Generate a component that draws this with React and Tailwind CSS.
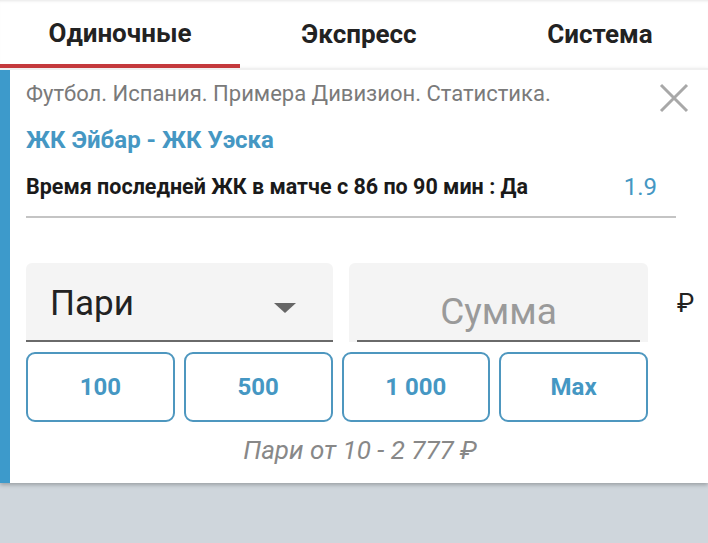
import React from "react";

const tabs = [
  { label: "Одиночные", w: "w-[240px]" },
  { label: "Экспресс", w: "w-[238px]" },
  { label: "Система", w: "flex-1 pl-[14px]" },
];
const amounts = ["100", "500", "1 000", "Max"];

const CloseIcon = () => (
  <svg width="30" height="30" viewBox="0 0 30 30" className="shrink-0 -mr-[13px] mt-[3px]">
    <path d="M2 2 L28 28 M28 2 L2 28" stroke="#a8a8a8" strokeWidth="3" />
  </svg>
);

const App = () => {
  return (
    <div className="w-[708px] h-[543px] bg-[#cfd6dc] font-['Roboto',sans-serif] overflow-hidden">
      <div className="h-[68px] bg-white flex shadow-[inset_0_3px_3px_-2px_rgba(0,0,0,0.1)]">
        {tabs.map((t, i) => (
          <div
            key={t.label}
            className={`${t.w} flex items-center justify-center text-[26px] font-bold text-[#222] ${
              i === 0 ? "border-b-4 border-[#c4393c] pt-[3px]" : ""
            }`}
          >
            {t.label}
          </div>
        ))}
      </div>
      <div className="h-[415px] bg-white flex shadow-[0_2px_4px_rgba(0,0,0,0.25)] border-t-2 border-[#f0f0f0]">
        <div className="w-[10px] shrink-0 bg-[#3d9acb]" />
        <div className="flex-1 min-w-0 pl-4 pr-8 pt-[10px]">
          <div className="flex justify-between items-start h-[28px]">
            <span className="text-[22px] leading-[28px] text-[#7a7a7a] whitespace-nowrap">
              Футбол. Испания. Примера Дивизион. Статистика.
            </span>
            <CloseIcon />
          </div>
          <div className="mt-[18px] h-[28px] text-[24px] leading-[28px] font-bold text-[#4597c3]">
            ЖК Эйбар - ЖК Уэска
          </div>
          <div className="mt-[19px] h-[28px] flex justify-between items-center">
            <span className="text-[21.5px] leading-[28px] font-bold text-[#1a1a1a] whitespace-nowrap">
              Время последней ЖК в матче с 86 по 90 мин : Да
            </span>
            <span className="text-[24px] leading-[28px] text-[#4597c3] mr-[19px]">1.9</span>
          </div>
          <div className="mt-[15px] h-[2px] bg-[#c4c4c4]" />
          <div className="mt-[45px] flex items-center">
            <div className="w-[307px] shrink-0 h-[79px] bg-[#f4f4f4] rounded-t-[6px] border-b-2 border-[#6a6a6a] flex items-center justify-between pl-[24px] pr-[37px]">
              <span className="text-[35px] text-[#222] leading-none mt-[4px]">Пари</span>
              <svg width="22" height="10" viewBox="0 0 22 10" className="mt-[12px]">
                <path d="M0 0 L22 0 L11 10 Z" fill="#666" />
              </svg>
            </div>
            <div className="ml-[16px] w-[299px] shrink-0 h-[79px] bg-[#f4f4f4] rounded-t-[6px] px-[8px] flex">
              <div className="flex-1 border-b-2 border-[#6a6a6a] flex items-center justify-center">
                <span className="text-[37px] text-[#9a9a9a] leading-none mt-[20px]">Сумма</span>
              </div>
            </div>
            <span className="ml-[29px] text-[26px] text-[#222] mt-[2px]">₽</span>
          </div>
          <div className="mt-[10px] w-[622px] grid grid-cols-4 gap-[9px]">
            {amounts.map((a) => (
              <div
                key={a}
                className="h-[70px] border-2 border-[#4e97bf] rounded-[9px] flex items-center justify-center text-[24px] font-bold text-[#4597c3]"
              >
                {a}
              </div>
            ))}
          </div>
          <div className="mt-[14px] w-[668px] text-center text-[26px] leading-[28px] italic text-[#888]">
            Пари от 10 - 2 777 ₽
          </div>
        </div>
      </div>
    </div>
  );
};

export default App;
